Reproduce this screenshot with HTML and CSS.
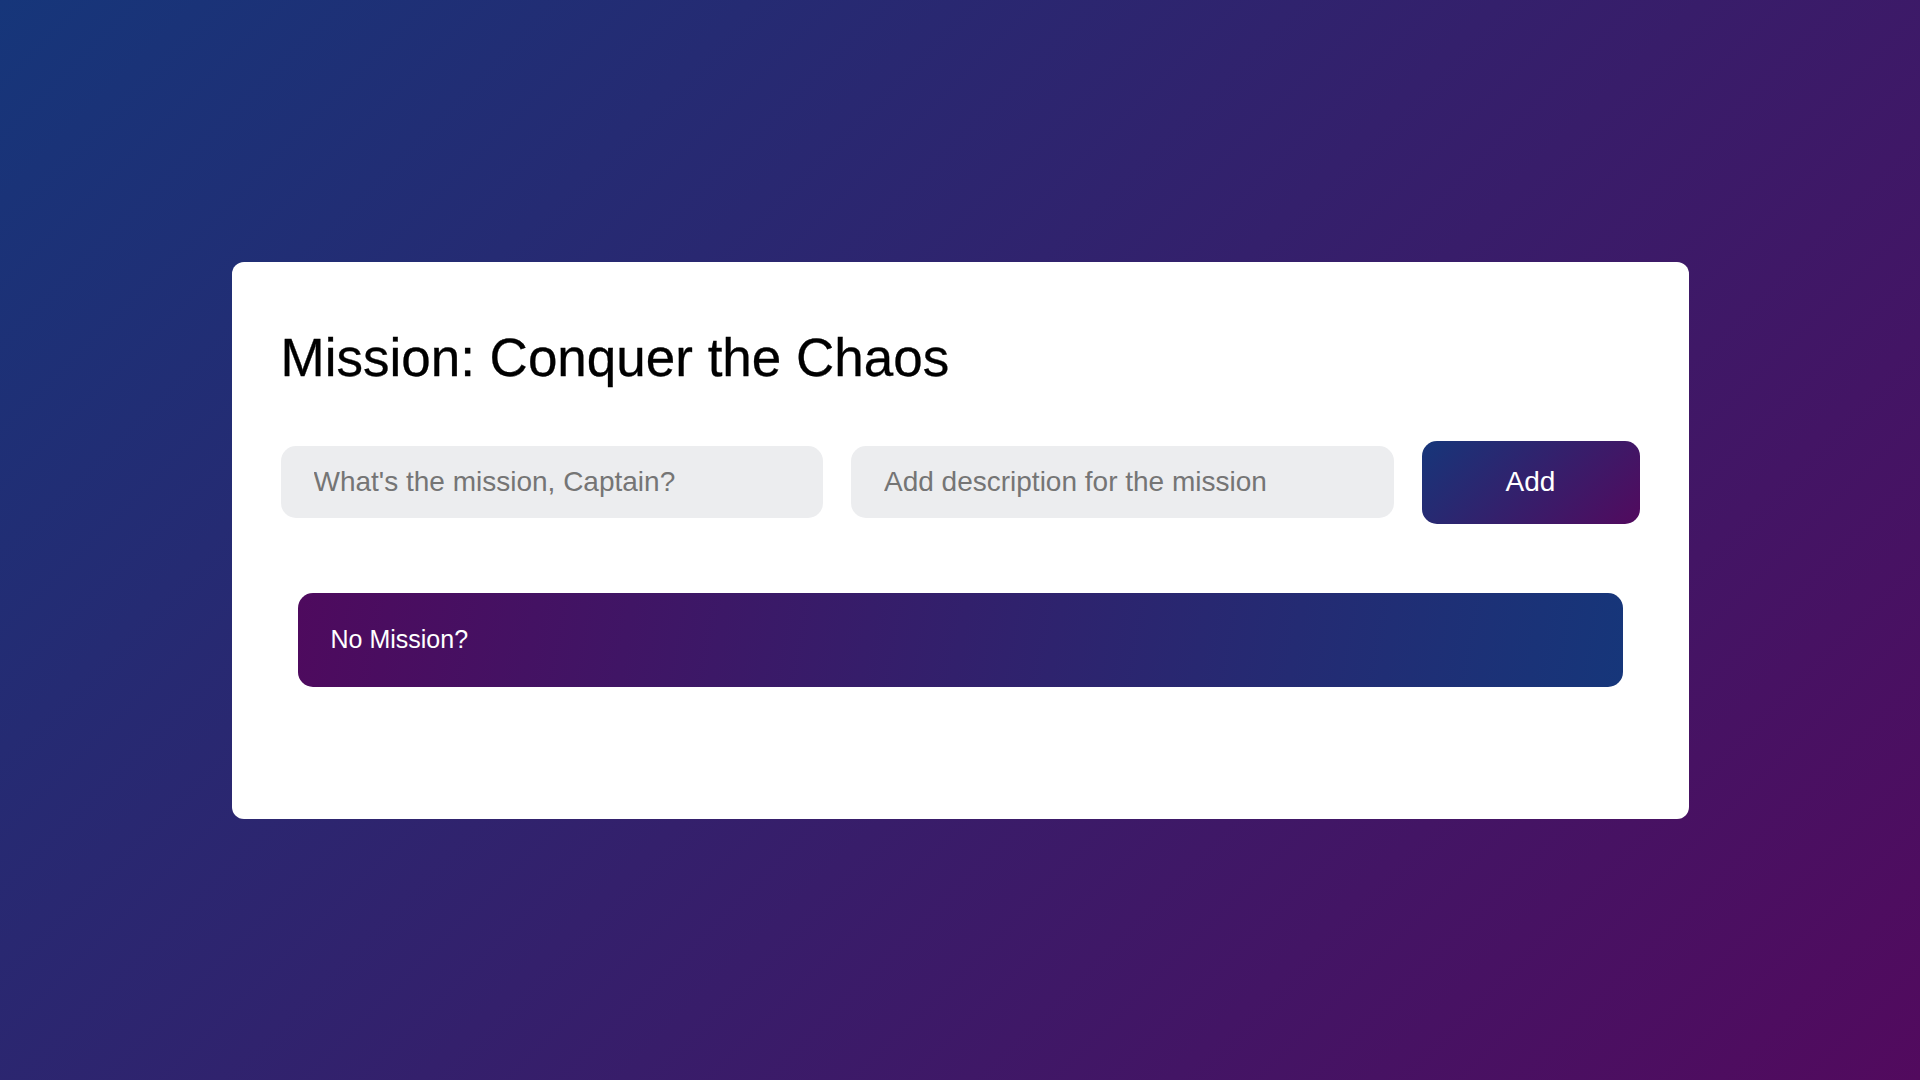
FILE: index.html
```html
<!DOCTYPE html>
<html lang="en">
<head>
<meta charset="utf-8">
<title>Mission: Conquer the Chaos</title>
<link rel="stylesheet" href="styles.css">
</head>
<body>
  <main class="card">
    <h1 class="title">Mission: Conquer the Chaos</h1>
    <form class="entry" onsubmit="return false">
      <input class="field" type="text" placeholder="What's the mission, Captain?">
      <input class="field" type="text" placeholder="Add description for the mission">
      <button class="add-btn" type="submit">Add</button>
    </form>
    <div class="list">
      <div class="empty">No Mission?</div>
    </div>
  </main>
</body>
</html>
```

FILE: styles.css
```css
html, body {
  margin: 0;
  padding: 0;
}

body {
  min-height: 100vh;
  display: flex;
  align-items: center;
  justify-content: center;
  background: linear-gradient(135deg, #16367a 0%, #520a5e 100%);
  font-family: "Liberation Sans", Arial, sans-serif;
}

.card {
  width: 1457px;
  box-sizing: border-box;
  background: #ffffff;
  border-radius: 12px;
  padding: 65px 49px 132px;
}

.title {
  margin: 0;
  font-size: 53px;
  font-weight: 400;
  line-height: 61px;
  color: #000000;
  -webkit-text-stroke: 0.3px #000;
}

.entry {
  margin: 53px 0 0;
  display: flex;
  align-items: center;
  gap: 28px;
}

.field {
  flex: 1;
  min-width: 0;
  height: 72px;
  box-sizing: border-box;
  border: none;
  outline: none;
  border-radius: 15px;
  background: #ecedef;
  padding: 0 33px;
  font-family: "Liberation Sans", Arial, sans-serif;
  font-size: 28px;
  color: #333;
}

.field::placeholder {
  color: #757575;
}

.add-btn {
  flex: 0 0 218px;
  height: 83px;
  border: none;
  border-radius: 15px;
  background: linear-gradient(135deg, #16367a 0%, #520a5e 100%);
  color: #ffffff;
  font-family: "Liberation Sans", Arial, sans-serif;
  font-size: 28px;
  cursor: pointer;
}

.list {
  margin-top: 69px;
  padding: 0 17px;
}

.empty {
  height: 94px;
  box-sizing: border-box;
  display: flex;
  align-items: center;
  padding: 0 33px;
  border-radius: 15px;
  background: linear-gradient(100deg, #4e0a5e 0%, #16367a 100%);
  color: #ffffff;
  font-size: 25px;
}
```
